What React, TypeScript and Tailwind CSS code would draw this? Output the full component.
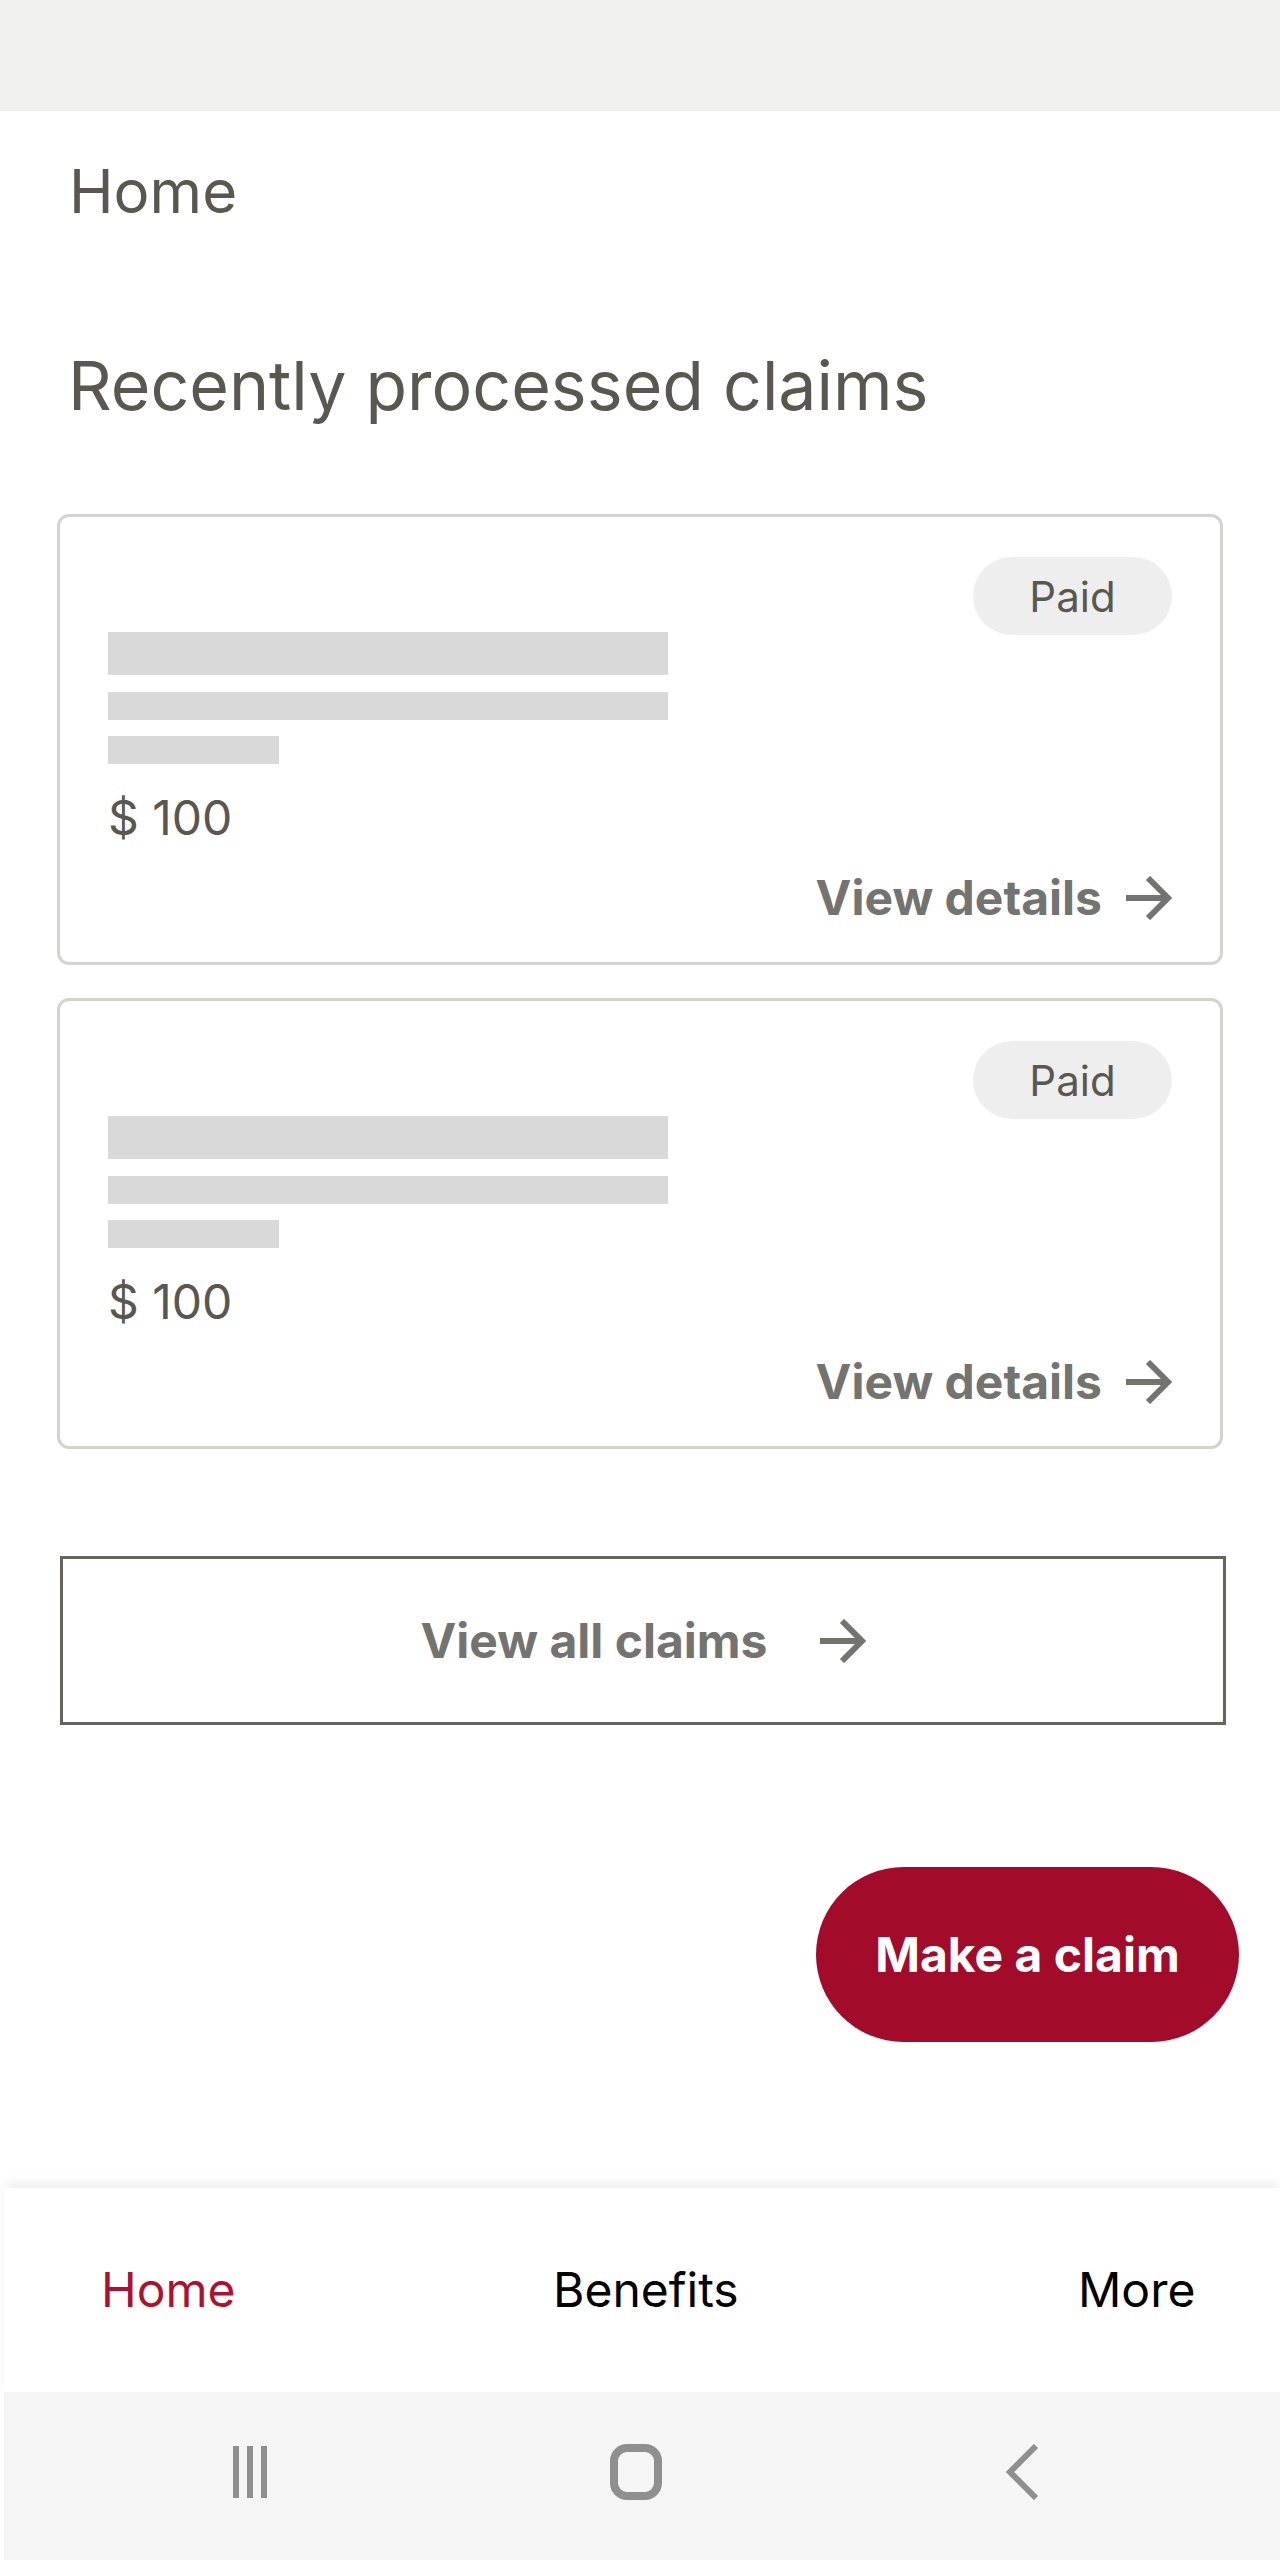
import React from 'react';

const Arrow: React.FC = () => (
  <svg width="46" height="44" viewBox="0 0 46 44" className="shrink-0">
    <path d="M0 22 H42" fill="none" stroke="currentColor" strokeWidth="6" />
    <path d="M22 2 L42 22 L22 42" fill="none" stroke="currentColor" strokeWidth="6" />
  </svg>
);

interface ClaimCardProps {
  amount: string;
  status: string;
}

const ClaimCard: React.FC<ClaimCardProps> = ({ amount, status }) => {
  return (
    <div className="h-[451px] border-[3px] border-[#d3d3cf] rounded-[12px] px-[48px] pt-[40px] flex flex-col">
      <div className="flex items-start justify-between">
        {/* Placeholder lines */}
        <div className="flex flex-col mt-[75px]">
          <div className="w-[560px] h-[43px] bg-[#d9d9d9]" />
          <div className="w-[560px] h-[28px] bg-[#d9d9d9] mt-[17px]" />
          <div className="w-[171px] h-[28px] bg-[#d9d9d9] mt-[16px]" />
          <div className="mt-[26px] text-[48px] leading-[56px] text-[#585850]">{amount}</div>
        </div>
        <div className="w-[199px] h-[78px] rounded-full bg-[#eeeeee] flex items-center justify-center text-[42px] text-[#585850]">
          {status}
        </div>
      </div>
      <div className="mt-[24px] flex items-center justify-end gap-[24px] text-[#737370]">
        <span className="text-[48px] leading-[56px] font-bold">View details</span>
        <Arrow />
      </div>
    </div>
  );
};

const App: React.FC = () => {
  return (
    <div
      className="w-[1280px] h-[2560px] bg-white flex flex-col overflow-hidden"
      style={{ fontFamily: 'Inter, "Noto Sans", sans-serif' }}
    >
      {/* Status bar */}
      <div className="h-[111px] bg-[#f0f0ee] shrink-0" />

      {/* Main content */}
      <div className="flex-1 flex flex-col">
        <h1 className="ml-[69px] mt-[45px] text-[60px] leading-[70px] text-[#585850]">Home</h1>
        <h2 className="ml-[68px] mt-[121px] text-[68px] leading-[76px] text-[#585850]">Recently processed claims</h2>

        <div className="mx-[57px] mt-[91px] flex flex-col gap-[33px]">
          <ClaimCard amount="$ 100" status="Paid" />
          <ClaimCard amount="$ 100" status="Paid" />
        </div>

        <button className="ml-[60px] mr-[54px] mt-[107px] h-[169px] border-[3px] border-[#65655d] flex items-center justify-center gap-[52px] text-[#737370]">
          <span className="text-[48px] font-bold">View all claims</span>
          <Arrow />
        </button>

        <div className="flex justify-end mt-[142px] pr-[41px]">
          <button className="w-[423px] h-[175px] rounded-full bg-[#a30b2b] text-white text-[48px] font-bold">
            Make a claim
          </button>
        </div>
      </div>

      {/* Bottom navigation */}
      <div className="h-[204px] shrink-0 bg-white ml-[4px] shadow-[0_-6px_10px_rgba(0,0,0,0.06)] flex items-center pl-[97px] text-[48px]">
        <div className="w-[452px]">
          <span className="text-[#b0102f]">Home</span>
        </div>
        <div className="w-[525px]">
          <span className="text-black">Benefits</span>
        </div>
        <span className="text-black">More</span>
      </div>

      {/* System navigation */}
      <div className="h-[168px] shrink-0 bg-[#f5f5f5] ml-[4px] flex items-center pl-[229px] pb-[8px] gap-[343px] text-[#8f8f8f]">
        <svg width="34" height="52" viewBox="0 0 34 52">
          <rect x="0" y="0" width="6" height="52" fill="currentColor" />
          <rect x="14" y="0" width="6" height="52" fill="currentColor" />
          <rect x="28" y="0" width="6" height="52" fill="currentColor" />
        </svg>
        <svg width="52" height="56" viewBox="0 0 52 56">
          <rect x="4" y="4" width="44" height="48" rx="13" fill="none" stroke="currentColor" strokeWidth="8" />
        </svg>
        <svg width="34" height="56" viewBox="0 0 34 56">
          <path d="M31 2 L5 28 L31 54" fill="none" stroke="currentColor" strokeWidth="6" />
        </svg>
      </div>
    </div>
  );
};

export default App;
